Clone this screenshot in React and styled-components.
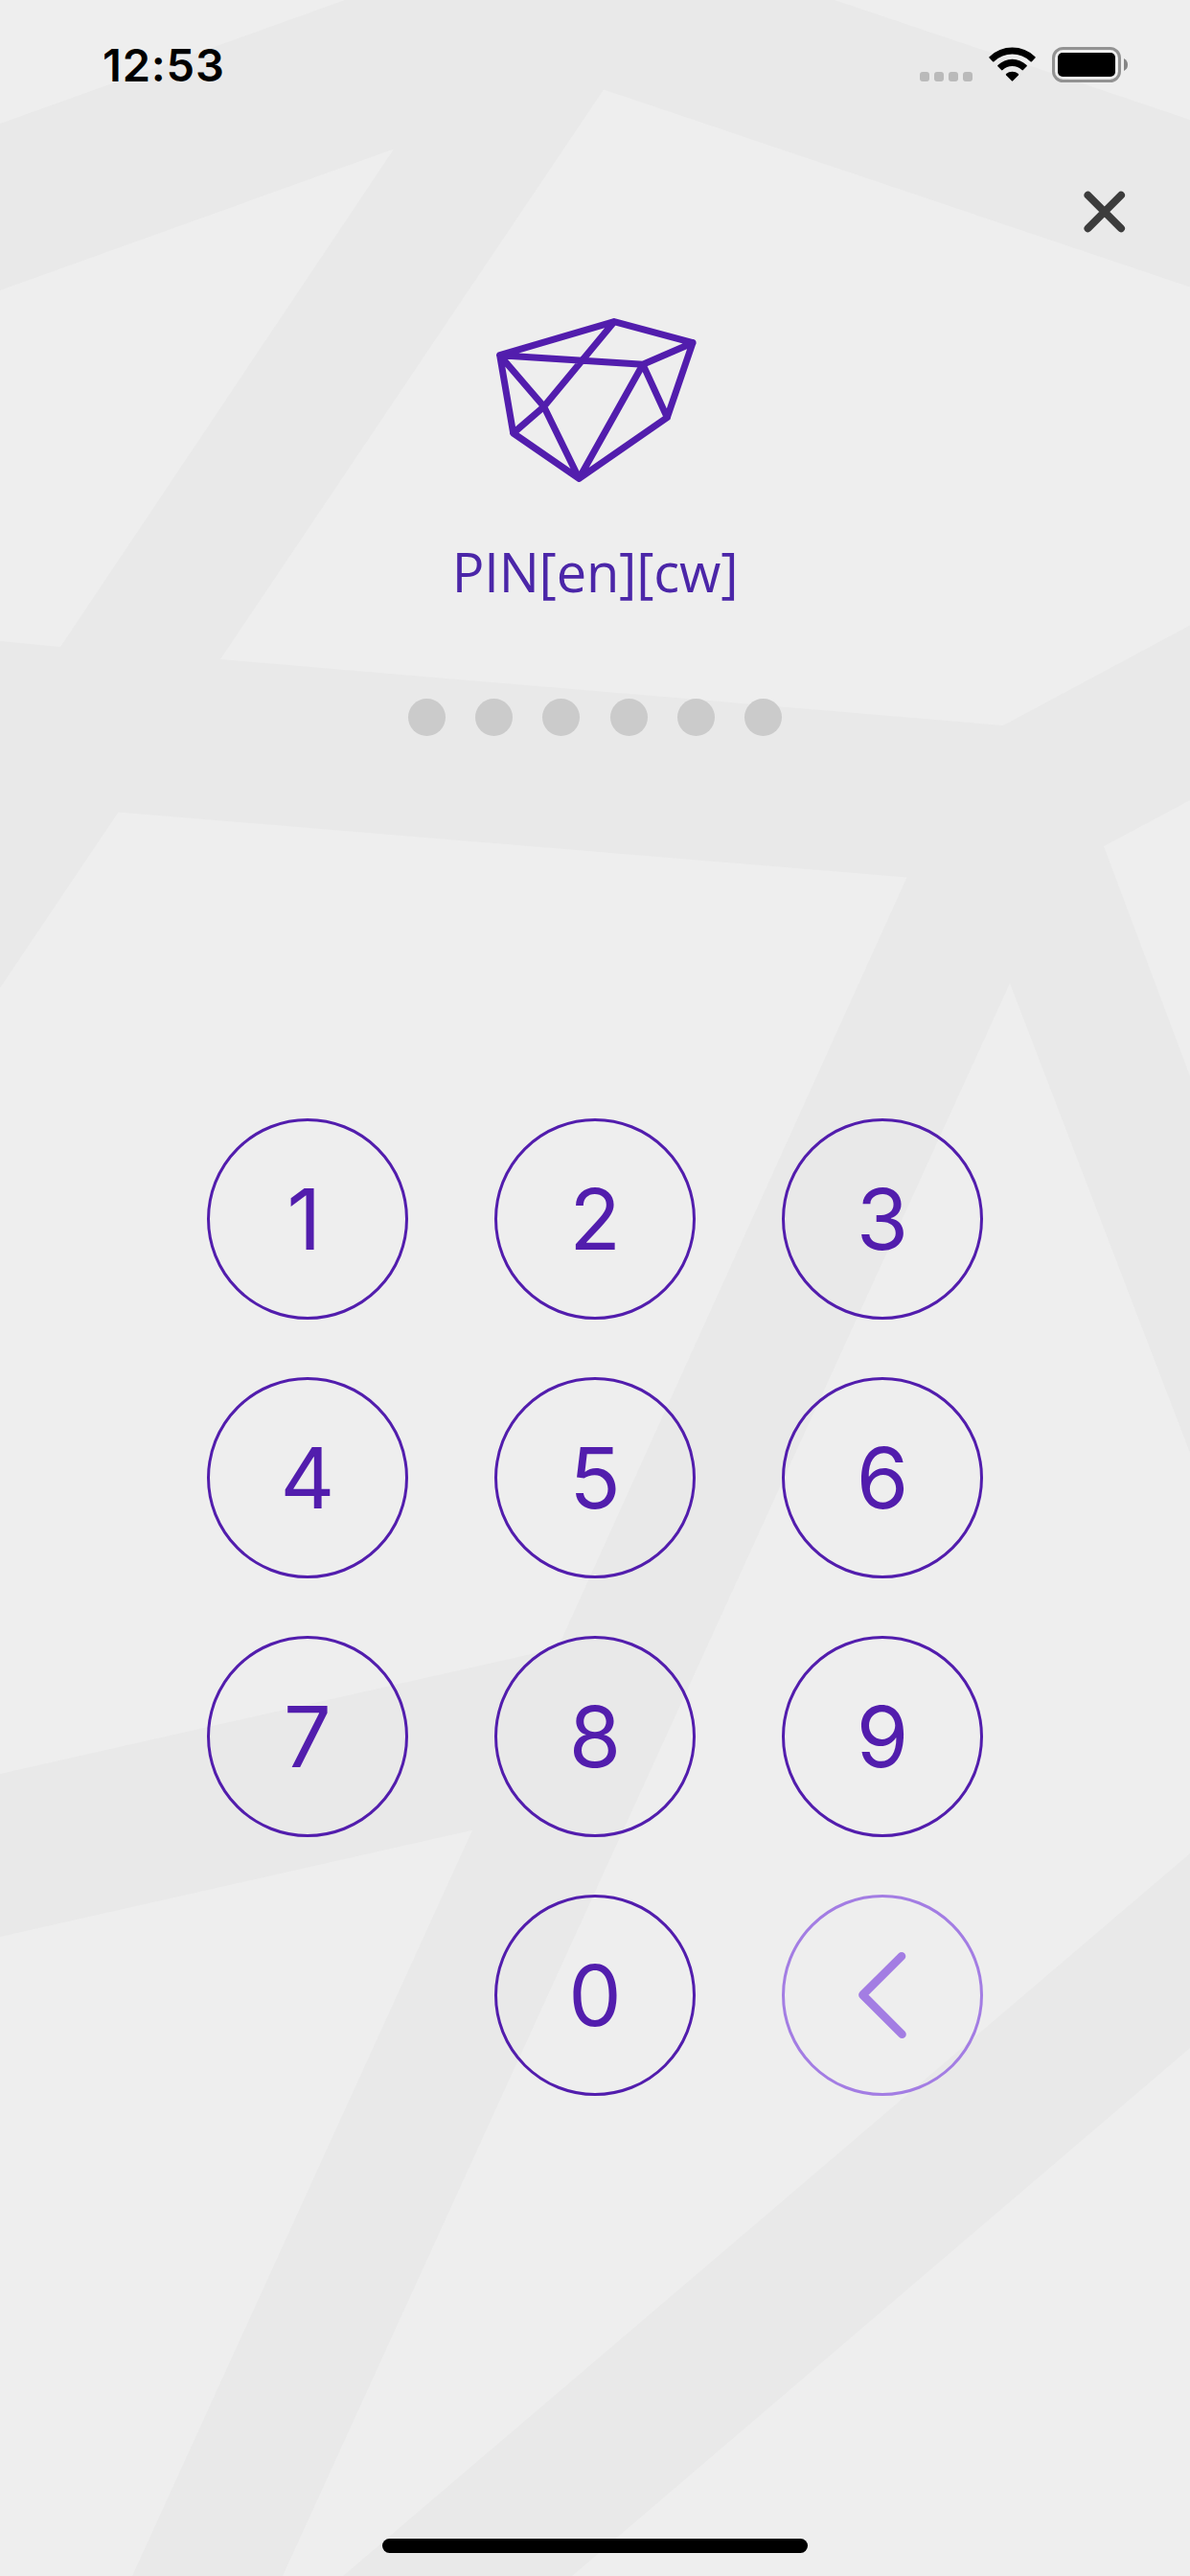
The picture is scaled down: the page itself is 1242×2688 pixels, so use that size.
import React from "react";
import styled, { createGlobalStyle } from "styled-components";

const PURPLE = "#521dad";
const LILAC = "#a37de3";

const GlobalStyle = createGlobalStyle`
  * { box-sizing: border-box; }
  body { margin: 0; background: #eeeeee; }
`;

const Screen = styled.main`
  position: relative;
  width: 1242px;
  height: 2688px;
  overflow: hidden;
  display: flex;
  flex-direction: column;
  align-items: center;
  background: #e9e9e9;
  font-family: Inter, "Liberation Sans", sans-serif;
`;

const Backdrop = styled.svg`
  position: absolute;
  inset: 0;
  width: 100%;
  height: 100%;
  fill: #eeeeee;
`;

const StatusBar = styled.header`
  position: relative;
  display: flex;
  justify-content: space-between;
  width: 100%;
  height: 132px;
  padding: 49px 64px 0 107px;
`;

const Clock = styled.time`
  height: 40px;
  line-height: 38px;
  font-size: 47px;
  font-weight: 600;
  letter-spacing: 0.8px;
  color: #000;
`;

const Indicators = styled.div`
  display: flex;
  align-items: flex-start;
`;

const Signal = styled.div`
  display: flex;
  gap: 5px;
  margin: 26px 17px 0 0;
`;

const SignalDot = styled.i`
  width: 10px;
  height: 10px;
  border-radius: 3px;
  background: #bababa;
`;

const Wifi = styled.svg`
  width: 49px;
  height: 36px;
  margin-right: 17px;
`;

const Battery = styled.svg`
  width: 80px;
  height: 37px;
`;

const Toolbar = styled.div`
  position: relative;
  display: flex;
  justify-content: flex-end;
  width: 100%;
  height: 193px;
  padding: 67px 67px 0 0;
`;

const IconButton = styled.button`
  width: 44px;
  height: 44px;
  padding: 0;
  border: 0;
  background: none;
`;

const Glyph = styled.svg`
  display: block;
  fill: none;
  stroke: currentColor;
  stroke-width: ${(p) => p.$weight};
  stroke-linecap: round;
  stroke-linejoin: round;
`;

const Logo = styled(Glyph)`
  position: relative;
  width: 240px;
  height: 180px;
  color: ${PURPLE};
`;

const Title = styled.h1`
  position: relative;
  margin: 51px 0 0;
  height: 80px;
  line-height: 80px;
  font-family: "Open Sans", "Noto Sans", sans-serif;
  font-size: 56px;
  font-weight: 400;
  letter-spacing: -0.2px;
  color: #4b26a8;
`;

const PinDots = styled.div`
  position: relative;
  display: flex;
  justify-content: space-between;
  width: 390px;
  margin-top: 93px;
`;

const PinDot = styled.span`
  width: 39px;
  height: 39px;
  border-radius: 50%;
  background: #cbcbcb;
`;

const Keypad = styled.div`
  position: relative;
  display: grid;
  grid-template-columns: repeat(3, 210px);
  grid-auto-rows: 210px;
  gap: 60px 90px;
  margin-top: 399px;
`;

const Key = styled.button`
  display: flex;
  align-items: center;
  justify-content: center;
  padding: 0 ${(p) => p.$inset || 0}px 0 0;
  border: 3px solid currentColor;
  border-radius: 50%;
  background: none;
  font: 400 88px/1 Inter, "Liberation Sans", sans-serif;
  color: ${(p) => (p.$muted ? LILAC : PURPLE)};
`;

const Blank = styled.span``;

const HomeIndicator = styled.div`
  position: relative;
  width: 444px;
  height: 15px;
  margin: auto 0 24px;
  border-radius: 8px;
  background: #000;
`;

const SHARDS = [
  "0,0 360,0 0,129",
  "871,0 1242,0 1242,125",
  "0,303 411,155.5 63,675 0,669",
  "630,93.5 1242,299.5 1242,652.5 1047,757 230,688",
  "123.5,847.5 946.5,915.5 582,1719.7 0,1851 0,1031",
  "0,2021 493,1909.7 138,2688 0,2688",
  "1054,1026 1242,1516 1242,1934 358,2688 295,2688",
  "1242,2137 1242,2688 597,2688",
  "1242,835 1152,883 1242,1123",
];

export default function App() {
  return (
    <Screen>
      <GlobalStyle />
      <Backdrop viewBox="0 0 1242 2688" aria-hidden="true">
        {SHARDS.map((points) => (
          <polygon key={points} points={points} />
        ))}
      </Backdrop>
      <StatusBar>
        <Clock>12:53</Clock>
        <Indicators>
          <Signal>
            {[0, 1, 2, 3].map((n) => (
              <SignalDot key={n} />
            ))}
          </Signal>
          <Wifi viewBox="0 0 49 36">
            <path d="M0.600 11.600a1 1 0 0 1 0-1.400A34.500 34.500 0 0 1 48.400 10.200a1 1 0 0 1 0 1.400L44.900 15.200a1 1 0 0 1-1.400 0A27.500 27.500 0 0 0 5.500 15.200a1 1 0 0 1-1.400 0Z" />
            <path d="M9.400 20.300a1 1 0 0 1 0-1.400A21.900 21.900 0 0 1 39.600 18.900a1 1 0 0 1 0 1.400L35.900 24.100a1 1 0 0 1-1.400 0A14.500 14.500 0 0 0 14.500 24.100a1 1 0 0 1-1.400 0Z" />
            <path d="M18.100 29.500a1 1 0 0 1 0-1.400A9.700 9.700 0 0 1 30.900 28.100a1 1 0 0 1 0 1.400L25.200 35.300a1 1 0 0 1-1.400 0Z" />
          </Wifi>
          <Battery viewBox="0 0 80 37">
            <rect x="1.500" y="1.500" width="69" height="34" rx="10" fill="none" stroke="#929292" strokeWidth="3" />
            <rect x="6" y="6" width="60" height="25" rx="5" />
            <path d="M75 12Q79 14 79 18.500T75 25Z" fill="#858585" />
          </Battery>
        </Indicators>
      </StatusBar>
      <Toolbar>
        <IconButton aria-label="Close">
          <Glyph $weight={8} viewBox="0 0 44 44" color="#3c3c3c">
            <path d="M4.500 4.700 39 39.300M39 4.700 4.500 39.300" />
          </Glyph>
        </IconButton>
      </Toolbar>
      <Logo $weight={21} viewBox="0 45 720 540">
        <path d="M62 182 420 77 666 143 586 377 310 568 104 426ZM62 182 510 211 666 143M586 377 510 211 310 568 200 343 62 182M420 77 200 343 104 426" />
      </Logo>
      <Title>PIN[en][cw]</Title>
      <PinDots>
        {[0, 1, 2, 3, 4, 5].map((n) => (
          <PinDot key={n} />
        ))}
      </PinDots>
      <Keypad>
        {["1", "2", "3", "4", "5", "6", "7", "8", "9"].map((digit) => (
          <Key key={digit} $inset={digit === "1" ? 7 : 0}>
            {digit}
          </Key>
        ))}
        <Blank />
        <Key>0</Key>
        <Key $muted aria-label="Delete">
          <Glyph $weight={8.6} width="204" height="204" viewBox="3 3 204 204">
            <path d="M125 64.200 84.400 104.600 125.500 145.700" />
          </Glyph>
        </Key>
      </Keypad>
      <HomeIndicator />
    </Screen>
  );
}
